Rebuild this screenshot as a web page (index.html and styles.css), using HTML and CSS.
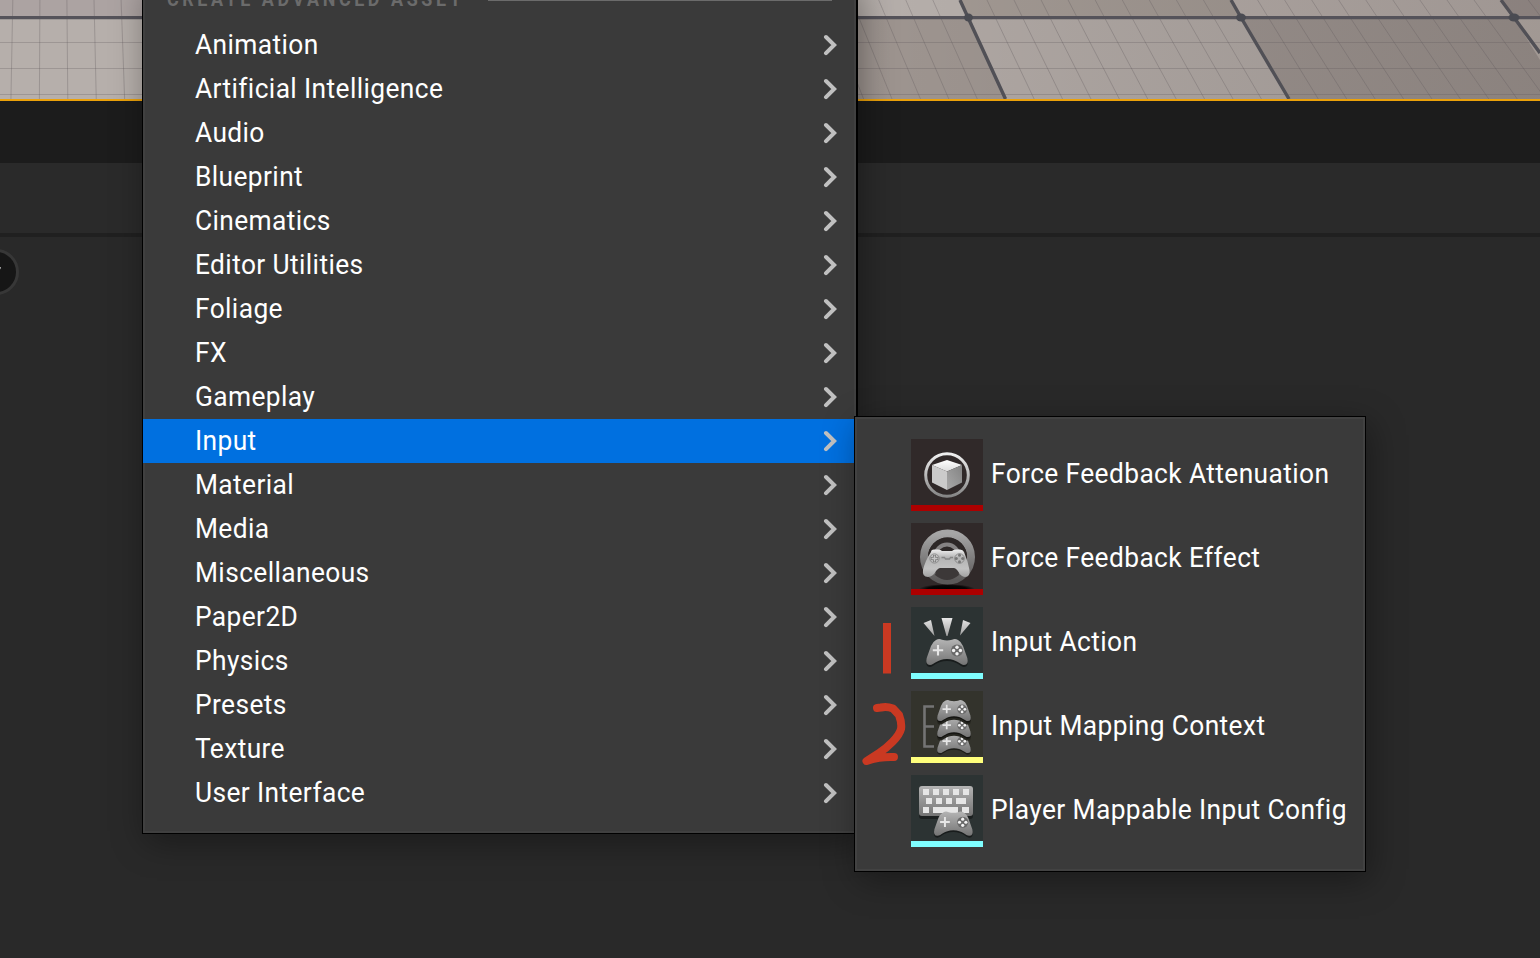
FILE: index.html
```html
<!DOCTYPE html>
<html lang="en">
<head>
<meta charset="utf-8">
<title>Create Asset</title>
<link rel="stylesheet" href="styles.css">
</head>
<body>
<svg class="defs" aria-hidden="true">
  <defs>
    <linearGradient id="metal" x1="0" y1="0" x2="0" y2="1"><stop offset="0" stop-color="#b4b4b4"/><stop offset="1" stop-color="#747474"/></linearGradient>
    <linearGradient id="bright" x1="0" y1="0" x2="0" y2="1"><stop offset="0" stop-color="#efefef"/><stop offset="1" stop-color="#858585"/></linearGradient>
    <linearGradient id="ray" x1="0" y1="0" x2="0" y2="1"><stop offset="0" stop-color="#e8e8e8"/><stop offset="1" stop-color="#a0a0a0"/></linearGradient>
    <linearGradient id="wheel" x1="0" y1="0" x2="0" y2="1"><stop offset="0" stop-color="#a6a6a6"/><stop offset="1" stop-color="#5b5959"/></linearGradient>
    <linearGradient id="front" x1="0" y1="0" x2="0" y2="1"><stop offset="0" stop-color="#efefef"/><stop offset=".3" stop-color="#b4b4b4"/><stop offset=".7" stop-color="#c2c2c2"/><stop offset="1" stop-color="#a2a2a2"/></linearGradient>
    <linearGradient id="side" x1="1" y1="0" x2="0" y2="1"><stop offset="0" stop-color="#838383"/><stop offset="1" stop-color="#a9a9a9"/></linearGradient>
    <linearGradient id="topface" x1="0" y1="0" x2="0" y2="1"><stop offset="0" stop-color="#fff"/><stop offset="1" stop-color="#dcdcdc"/></linearGradient>
    <radialGradient id="floor"><stop offset="0" stop-color="#000"/><stop offset=".7" stop-color="#080606"/><stop offset="1" stop-color="#080606" stop-opacity="0"/></radialGradient>
    <linearGradient id="dim" x1="0" x2="1" y1="0" y2="0"><stop offset="0" stop-color="#000" stop-opacity="0"/><stop offset="1" stop-color="#1b1410" stop-opacity=".13"/></linearGradient>
    <symbol id="pad" viewBox="0 0 42 30" overflow="visible">
      <path d="M10 1Q13-.7 16 .8Q21 2 26 .8Q29-.7 32 1Q35 2.5 37 7L41.3 19Q43 26 38 26C34 26 32 20 21 20S8 26 4 26Q-1 26 .7 19L5 7Q7 2.5 10 1Z" fill="#000" opacity=".45" transform="translate(0 2)"/>
      <path d="M10 1Q13-.7 16 .8Q21 2 26 .8Q29-.7 32 1Q35 2.5 37 7L41.3 19Q43 26 38 26C34 26 31 20 21 20S8 26 4 26Q-1 26 .7 19L5 7Q7 2.5 10 1Z" fill="url(#metal)"/>
      <path d="M12 6v10.5M6.800 11.200h10.400" stroke="#e6e6e6" stroke-width="2.100"/>
      <circle cx="31" cy="11.500" r="6" fill="#696969"/>
      <g fill="#f2f2f2"><circle cx="31" cy="8.200" r="1.700"/><circle cx="31" cy="14.800" r="1.700"/><circle cx="27.600" cy="11.500" r="1.700"/><circle cx="34.400" cy="11.500" r="1.700"/></g>
    </symbol>
    <symbol id="padgap" viewBox="0 0 42 30" overflow="visible">
      <path d="M5 7H37L41.300 19Q43 26 38 26C34 26 31 20 21 20S8 26 4 26Q-1 26 .7 19Z" fill="#25251f"/>
    </symbol>
    <symbol id="chev" viewBox="0 0 14 22"><path d="M3 3L11.200 11L3 19.200" fill="none" stroke="#c0c0c0" stroke-width="4" stroke-linecap="round"/></symbol>
  </defs>
</svg>

<div class="app">
  <div class="viewport"><svg width="1540" height="101" viewBox="0 0 1540 101">
    <rect width="1540" height="101" fill="#b6afab"/>
    <rect width="143" height="18" fill="#aca3a2"/>
    <path d="M858 18H968L1006 101H858Z" fill="#9e9590"/>
    <path d="M968 18H1241L1290 101H1006Z" fill="#b0a8a4"/>
    <path d="M1241 18H1514L1574 101H1290Z" fill="#9c938f"/>
    <path d="M1514 18H1540V60Z" fill="#b5aca7"/>
    <path d="M960 0H1231L1241 18H968Z" fill="#a29993"/>
    <path d="M1231 0H1501L1514 18H1241Z" fill="#b3aaa6"/>
    <path d="M1501 0H1540V18H1514Z" fill="#9b918e"/>
    <rect x="858" width="682" height="101" fill="url(#dim)"/>
    <path d="M0 42.500H1540M0 68.500H1540M0 94.500H1540" stroke="#5e5759" stroke-opacity=".28"/>
    <g id="fine"></g>
    <path d="M0 17.600H1540" stroke="#55535a" stroke-width="3.200"/>
    <path d="M960 0L968 17.500L1005.500 99M1231 0L1241 17.500L1289 99M1501 0L1514 17.500L1540 53" fill="none" stroke="#515056" stroke-width="3.400"/>
    <g fill="#4a4b52"><ellipse cx="968.500" cy="17.500" rx="4.500" ry="4"/><ellipse cx="1241" cy="17.500" rx="5" ry="4"/><ellipse cx="1514" cy="17.500" rx="5.500" ry="4"/></g>
    <rect y="99" width="1540" height="2" fill="#eba10a"/>
  </svg></div>
  <div class="tabs"></div>
  <div class="toolbar"></div>
  <div class="content"><div class="knob"></div></div>
</div>

<nav class="menu">
  <div class="section"><span>CREATE ADVANCED ASSET</span><i></i></div>
  <div class="list">
    <div class="row"><span>Animation</span><svg><use href="#chev"/></svg></div>
    <div class="row"><span>Artificial Intelligence</span><svg><use href="#chev"/></svg></div>
    <div class="row"><span>Audio</span><svg><use href="#chev"/></svg></div>
    <div class="row"><span>Blueprint</span><svg><use href="#chev"/></svg></div>
    <div class="row"><span>Cinematics</span><svg><use href="#chev"/></svg></div>
    <div class="row"><span>Editor Utilities</span><svg><use href="#chev"/></svg></div>
    <div class="row"><span>Foliage</span><svg><use href="#chev"/></svg></div>
    <div class="row"><span>FX</span><svg><use href="#chev"/></svg></div>
    <div class="row"><span>Gameplay</span><svg><use href="#chev"/></svg></div>
    <div class="row active"><span>Input</span><svg><use href="#chev"/></svg></div>
    <div class="row"><span>Material</span><svg><use href="#chev"/></svg></div>
    <div class="row"><span>Media</span><svg><use href="#chev"/></svg></div>
    <div class="row"><span>Miscellaneous</span><svg><use href="#chev"/></svg></div>
    <div class="row"><span>Paper2D</span><svg><use href="#chev"/></svg></div>
    <div class="row"><span>Physics</span><svg><use href="#chev"/></svg></div>
    <div class="row"><span>Presets</span><svg><use href="#chev"/></svg></div>
    <div class="row"><span>Texture</span><svg><use href="#chev"/></svg></div>
    <div class="row"><span>User Interface</span><svg><use href="#chev"/></svg></div>
  </div>
</nav>

<nav class="submenu">
  <div class="item"><svg class="thumb red" viewBox="0 0 72 72">
    <circle cx="36" cy="36" r="21.300" fill="none" stroke="url(#bright)" stroke-width="3"/>
    <path d="M36 21L51 26L36 32.500L21 26Z" fill="url(#topface)"/><path d="M21 26L36 32.500V51L21 43.500Z" fill="#cbcbcb"/><path d="M51 26L36 32.500V51L51 43.500Z" fill="url(#side)"/>
    <rect y="66" width="72" height="6" fill="#ac0000"/></svg><span>Force Feedback Attenuation</span></div>
  <div class="item"><svg class="thumb red" viewBox="0 0 72 72">
    <ellipse cx="36" cy="66" rx="28" ry="5" fill="url(#floor)"/>
    <circle cx="36.500" cy="34" r="23.500" fill="none" stroke="url(#wheel)" stroke-width="8"/>
    <circle cx="36.500" cy="34" r="19.500" fill="#2d2827"/>
    <circle cx="36" cy="33" r="11.500" fill="none" stroke="#858383" stroke-width="4"/>
    <path d="M27 43H46L48 52Q36 62 24 52Z" fill="#3c3838"/>
    <path d="M20 29Q20 26.500 23 26.500H27Q30 26.500 31 28H41Q42 26.500 45 26.500H49Q52 26.500 53 29Q57 38 58.500 47Q59.500 54 54 54C48 54 47 45 43 45H29C25 45 24 54 17 54Q11 54 12 47Q14 38 20 29Z" fill="url(#front)"/>
    <g fill="none" stroke="#8c8c8c"><circle cx="23.500" cy="35.500" r="4.600"/><circle cx="48.500" cy="35.500" r="4.800"/></g>
    <path d="M23.500 32v7M20 35.500h7" stroke="#7c7c7c" stroke-width="3"/><path d="M23.500 32.500v6M20.500 35.500h6" stroke="#c5c5c5" stroke-width="1.400"/>
    <g fill="#787878"><circle cx="48.500" cy="32.300" r="1.500"/><circle cx="48.500" cy="38.700" r="1.500"/><circle cx="45.300" cy="35.500" r="1.500"/><circle cx="51.700" cy="35.500" r="1.500"/></g>
    <path d="M30.500 34.500h3l1 1.500h4l1-1.500h2.500" fill="none" stroke="#868686" stroke-width="1.300"/>
    <rect y="66" width="72" height="6" fill="#ac0000"/></svg><span>Force Feedback Effect</span></div>
  <div class="item"><svg class="thumb cyan" viewBox="0 0 72 72">
    <path d="M30.500 11H41.500L36.500 29H35.500ZM12.500 16L20 13L23.500 29ZM52 13L59.500 16L49 28.500Z" fill="url(#ray)"/>
    <use href="#pad" x="15" y="32" width="42" height="30"/>
    <rect y="66" width="72" height="6" fill="#7ffeff"/></svg><span>Input Action</span></div>
  <div class="item"><svg class="thumb yellow" viewBox="0 0 72 72">
    <path d="M23 15.500H13.500V55.500H23M13.500 35.500H23" fill="none" stroke="#747474" stroke-width="2.600"/>
    <use href="#pad" x="26" y="41" width="34" height="24.300"/>
    <use href="#padgap" x="26" y="28.500" width="34" height="24.300"/>
    <use href="#pad" x="26" y="25" width="34" height="24.300"/>
    <use href="#padgap" x="26" y="12.500" width="34" height="24.300"/>
    <use href="#pad" x="26" y="9" width="34" height="24.300"/>
    <rect y="66" width="72" height="6" fill="#ffff7c"/></svg><span>Input Mapping Context</span></div>
  <div class="item"><svg class="thumb cyan" viewBox="0 0 72 72">
    <rect x="8" y="13" width="54" height="31" rx="3" fill="#1c2020"/>
    <rect x="8" y="11" width="54" height="30" rx="3" fill="url(#metal)"/>
    <path d="M12 14h6v6h-6zM22 14h6v6h-6zM32 14h6v6h-6zM42 14h6v6h-6zM52 14h6v6h-6zM15 23h6v6h-6zM25 23h6v6h-6zM35 23h6v6h-6zM45 23h10v6h-10zM12 32h6v6h-6zM22 32h25v6h-25zM51 32h7v6h-7z" fill="#e6e6e6"/>
    <use href="#pad" x="22.700" y="36.500" width="39.300" height="28"/>
    <rect y="66" width="72" height="6" fill="#7ffeff"/></svg><span>Player Mappable Input Config</span></div>
</nav>

<svg class="marks" viewBox="860 600 50 180" width="50" height="180">
  <rect x="883" y="623" width="8" height="50.500" fill="#ca3922"/>
  <path d="M877 708L881 707.500C885 706.500 889 707 893 708.500L899 715Q902 723 901 729C899 737 888 747 879 753L866.500 761Q878 756.500 894 757" fill="none" stroke="#ca3922" stroke-width="8" stroke-linecap="round" stroke-linejoin="round"/>
</svg>
<script src="grid.js"></script>
</body>
</html>
```
FILE: grid.js
```js
// Fine floor lines, fanning out from a centre near x = 50.
let d = '';
for (let k = -36; k <= 24; k++) {
  if (k % 10 === 0 && k >= 0) continue;
  const x = 968 + 27.3 * k;
  const slope = (x - 50) * 0.0413 / 82;
  d += `M${(x - slope * 17.5).toFixed(1)} 0L${(x + slope * 83.5).toFixed(1)} 101`;
}
const path = document.createElementNS('http://www.w3.org/2000/svg', 'path');
path.setAttribute('d', d);
path.setAttribute('stroke', '#5e5759');
path.setAttribute('stroke-opacity', '.3');
document.getElementById('fine').append(path);
```
FILE: styles.css
```css
* { box-sizing: border-box; }
body { margin: 0; width: 1540px; height: 958px; overflow: hidden; position: relative; background: #292929; font-family: Roboto, "Liberation Sans", sans-serif; color: #fff; }
.defs { position: absolute; width: 0; height: 0; }
.app { display: flex; flex-direction: column; height: 958px; }
.viewport { height: 101px; }
.viewport svg { display: block; }
.tabs { height: 62px; background: #1c1c1c; }
.toolbar { height: 74px; background: #2a2a2a; border-bottom: 4px solid #202020; }
.content { flex: 1; background: #292929; overflow: hidden; padding-top: 12px; }
.knob { width: 46px; height: 46px; margin-left: -27px; border: 3px solid #373737; border-radius: 50%; background: #161616; display: flex; align-items: center; }
.knob::after { content: ""; width: 4px; height: 3px; margin: -7px 0 0 21px; background: #aaa; border-radius: 0 0 3px 0; }
.menu { position: absolute; left: 142px; top: -20px; width: 716px; height: 854px; background: #3a3a3a; border: 1px solid #000; border-right-width: 2px; box-shadow: inset 0 0 0 2px #404040, 4px 8px 32px rgba(0,0,0,.36); }
.section { height: 42px; padding: 8px 24px 0; display: flex; align-items: flex-start; }
.section span { font-size: 20px; line-height: 20px; font-weight: 700; letter-spacing: 4px; color: #6b6b6b; width: 321px; white-space: nowrap; transform: scaleX(.895); transform-origin: left; margin-right: 0; }
.section i { width: 344px; height: 1px; margin-top: 11px; background: #6b6b6b; }
.row { height: 44px; padding: 0 19px 0 52px; display: flex; align-items: center; justify-content: space-between; line-height: 44px; }
.row span, .item span { font-size: 28px; white-space: nowrap; letter-spacing: .42px; transform: scaleX(.94); transform-origin: left; }
.row svg { width: 14px; height: 22px; flex: none; }
.row.active { background: #0070e0; }
.submenu { position: absolute; left: 854px; top: 416px; width: 512px; height: 456px; background: #3a3a3a; border: 1px solid #000; box-shadow: inset 0 0 0 2px #424242, 4px 8px 32px rgba(0,0,0,.36); padding: 22px 0 0 56px; display: flex; flex-direction: column; gap: 12px; }
.item { height: 72px; display: flex; align-items: center; gap: 8px; }
.item span { line-height: 44px; margin-top: -3px; }
.thumb { width: 72px; height: 72px; flex: none; }
.red { background: #302929; }
.cyan { background: #2c3333; }
.yellow { background: #33332c; }
.marks { position: absolute; left: 860px; top: 600px; }
```
